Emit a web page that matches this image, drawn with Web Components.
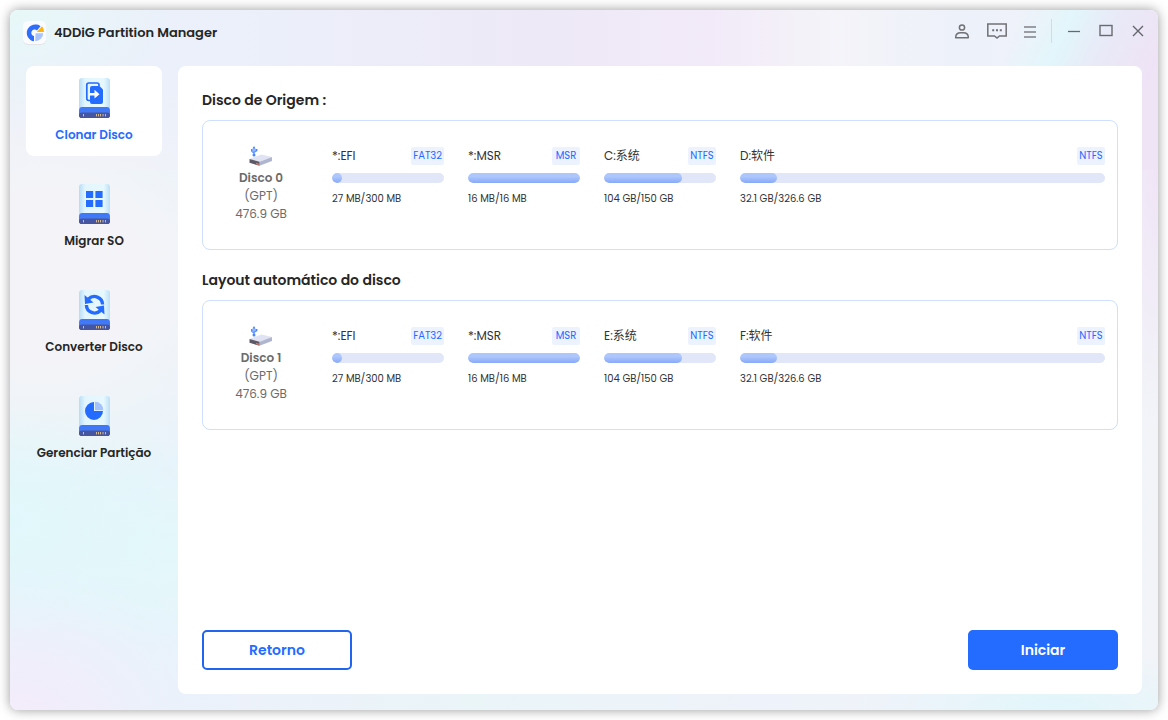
<!DOCTYPE html>
<html lang="pt">
<head>
<meta charset="utf-8">
<meta name="viewport" content="width=device-width, initial-scale=1">
<title>4DDiG Partition Manager</title>
<style>
  html, body { margin: 0; }
  body {
    background: #fff;
    color: #262626;
    font: 12px/18px Poppins, Inter, "Noto Sans CJK SC", sans-serif;
  }
</style>
</head>
<body>
<app-window>
  <title-bar slot="header">4DDiG Partition Manager</title-bar>
  <side-nav slot="nav">
    <nav-item icon="clone" active>Clonar Disco</nav-item>
    <nav-item icon="migrate">Migrar SO</nav-item>
    <nav-item icon="convert">Converter Disco</nav-item>
    <nav-item icon="manage">Gerenciar Partição</nav-item>
  </side-nav>
  <disk-section>
    <span slot="title">Disco de Origem :</span>
    <disk-summary slot="disk" name="Disco 0" scheme="(GPT)" size="476.9 GB"></disk-summary>
    <disk-partition name="*:EFI" format="FAT32" usage="27 MB/300 MB" percent="9"></disk-partition>
    <disk-partition name="*:MSR" format="MSR" usage="16 MB/16 MB" percent="100"></disk-partition>
    <disk-partition name="C:系统" format="NTFS" usage="104 GB/150 GB" percent="70"></disk-partition>
    <disk-partition name="D:软件" format="NTFS" usage="32.1 GB/326.6 GB" percent="10" wide></disk-partition>
  </disk-section>
  <disk-section>
    <span slot="title">Layout automático do disco</span>
    <disk-summary slot="disk" name="Disco 1" scheme="(GPT)" size="476.9 GB"></disk-summary>
    <disk-partition name="*:EFI" format="FAT32" usage="27 MB/300 MB" percent="9"></disk-partition>
    <disk-partition name="*:MSR" format="MSR" usage="16 MB/16 MB" percent="100"></disk-partition>
    <disk-partition name="E:系统" format="NTFS" usage="104 GB/150 GB" percent="70"></disk-partition>
    <disk-partition name="F:软件" format="NTFS" usage="32.1 GB/326.6 GB" percent="10" wide></disk-partition>
  </disk-section>
  <action-button slot="actions">Retorno</action-button>
  <action-button slot="actions" primary>Iniciar</action-button>
</app-window>

<script>
class BaseElement extends HTMLElement {
  connectedCallback() {
    if (this.shadowRoot) return;
    this.attachShadow({ mode: "open" }).innerHTML =
      `<style>*, :host { box-sizing: border-box; }</style>` + this.render();
  }
  attr(name) { return this.getAttribute(name) || ""; }
}

customElements.define("app-window", class extends BaseElement {
  render() {
    return `<style>
      :host { display: flex; min-height: 100vh; padding: 10px; }
      .window {
        flex: 1; display: flex; flex-direction: column; min-width: 0;
        border-radius: 8px;
        box-shadow: 0 0 12px rgba(0, 0, 0, .4);
        background:
          radial-gradient(ellipse 160px 110px at 0% 0%, #e7f8f8, #e7f8f800),
          linear-gradient(115deg, #e2f6fb00 83%, #e2f6fb 87%, #e9e9f7 91%, #efe3f6 96%) top / 100% 160px no-repeat,
          radial-gradient(ellipse 60px 260px at 100% 22%, #f0e4f6, #f0e4f600),
          radial-gradient(ellipse 150px 120px at 0% 73%, #e1f8fb, #e1f8fb00),
          radial-gradient(ellipse 170px 100px at 14% 77%, #e3f8fa, #e3f8fa00),
          radial-gradient(ellipse 220px 160px at 0% 102%, #f5ebfa, #f5ebfa00),
          radial-gradient(ellipse 200px 60px at 91% 100%, #e1f6fb, #e1f6fb00),
          radial-gradient(ellipse 260px 220px at 3% 38%, #f4f4f8 40%, #f4f4f800),
          linear-gradient(to right, #ebf0fa 20%, #eee9f7 46%, #f2eaf8 61%, #f4f4f9 72%, #edf1fa 83%, #f2f4f8) top / 100% 160px no-repeat,
          linear-gradient(to right, #e6f4fa 12%, #ecf1fa 20%, #eaf5f8 40%, #eef2fa 65%, #f2f4f8);
      }
      .body { flex: 1; display: flex; gap: 16px; padding: 0 16px 16px; }
      main {
        flex: 1; display: flex; flex-direction: column; gap: 20px; min-width: 0;
        padding: 24px; background: #fff; border-radius: 8px;
      }
      footer { display: flex; justify-content: space-between; margin-top: auto; }
    </style>
    <div class="window">
      <slot name="header"></slot>
      <div class="body">
        <slot name="nav"></slot>
        <main><slot></slot><footer><slot name="actions"></slot></footer></main>
      </div>
    </div>`;
  }
});

customElements.define("title-bar", class extends BaseElement {
  render() {
    return `<style>
      :host { display: block; }
      header { display: flex; align-items: flex-start; height: 56px; padding: 8px 4px 0 12px; }
      .logo { width: 26px; height: 28px; }
      h1 { flex: 1; margin: 0; padding-left: 6px; font-size: 13px; line-height: 30px; font-weight: 600; }
      .controls { display: flex; align-items: center; }
      button { display: block; padding: 0; border: 0; background: none; height: 26px; width: 32px; }
      button svg { display: block; margin: auto; }
      .first { width: 35px; }
      .rule { width: 1px; height: 24px; background: #d5dae3; margin: 0 6px 0 5px; }
    </style>
    <header>
      <svg class="logo" viewBox="0 0 26 28" aria-hidden="true">
        <rect x="1" y="4" width="23" height="23" rx="5" fill="#e1e4eb"/>
        <rect x="1" y="3" width="23" height="23" rx="5" fill="#fbfbfd"/>
        <path d="M18.5 8.2A8.5 8.5 0 1 0 12 23.3V18A3.3 3.3 0 1 1 15 12.5Z" fill="#2f6dfb"/>
        <path d="M13.6 15.2H21.2A8 8 0 0 1 13.2 23.2Z" fill="#a9c5fc"/>
        <path d="M14.8 14 20 8.3Q22 10.5 22 14Z" fill="#fbb514"/>
      </svg>
      <h1><slot></slot></h1>
      <div class="controls">
        <button class="first" aria-label="Conta"><svg width="16" height="18" viewBox="0 0 16 18" fill="none" stroke="#707176" stroke-width="1.5"><circle cx="8" cy="5.5" r="2.6"/><path d="M1.7 15.8V15A5 4.5 0 0 1 6.5 10.8H9.5A5 4.5 0 0 1 14.3 15V15.8Z" stroke-linejoin="round"/></svg></button>
        <button class="first" aria-label="Mensagens"><svg width="20" height="18" viewBox="0 0 20 18" fill="none" stroke="#707176" stroke-width="1.5"><path d="M.8 2H19.2V14H12.5L10 16 7.5 14H.8Z"/><path d="M5.2 8.2H7.2M9 8.2H11M12.8 8.2H14.8" stroke-width="2"/></svg></button>
        <button aria-label="Menu"><svg width="14" height="18" viewBox="0 0 14 18" stroke="#808187" stroke-width="1.7"><path d="M1 5H13M1 10H13M1 15H13"/></svg></button>
        <span class="rule"></span>
        <button aria-label="Minimizar"><svg width="14" height="18" viewBox="0 0 14 18" stroke="#666a70" stroke-width="1.3"><path d="M1 9.5H13"/></svg></button>
        <button aria-label="Maximizar"><svg width="14" height="18" viewBox="0 0 14 18" stroke="#6a6b70" stroke-width="1.4" fill="none"><rect x="1" y="3.5" width="12" height="10"/></svg></button>
        <button aria-label="Fechar"><svg width="12" height="18" viewBox="0 0 12 18" stroke="#63666b" stroke-width="1.4"><path d="M1 4 11 14M11 4 1 14"/></svg></button>
      </div>
    </header>`;
  }
});

customElements.define("side-nav", class extends BaseElement {
  render() {
    return `<style>
      :host { display: block; flex: 0 0 136px; }
      nav { display: flex; flex-direction: column; gap: 16px; }
    </style><nav><slot></slot></nav>`;
  }
});

const NAV_GLYPHS = {
  clone: `<path d="M11 22.5H9.7A2 2 0 0 1 7.8 20.5V7A2 2 0 0 1 9.8 5H18A2 2 0 0 1 20 7V8" fill="none" stroke="#246bff" stroke-width="1.7"/>
    <path d="M13 8H20.5L24 11.5V24A2 2 0 0 1 22 26H13A2 2 0 0 1 11 24V10A2 2 0 0 1 13 8Z" fill="#246bff"/>
    <path d="M10 15H15.5V11.7L20.5 16.2 15.5 20.5V17.4H10Z" fill="#fff"/>`,
  migrate: `<path d="M7 7H14.2V14H7ZM16.4 7H23.6V14H16.4ZM7 16H14.2V23H7ZM16.4 16H23.6V23H16.4Z" fill="#246bff"/>`,
  convert: `<path d="M9.5 9A8.2 8.2 0 0 1 23.6 14.5M21.5 20.5A8.2 8.2 0 0 1 7.4 15" fill="none" stroke="#246bff" stroke-width="3.4"/>
    <path d="M5.5 5 6 14 14.5 12.5ZM25.5 24.5 25 15.5 16.5 17Z" fill="#246bff"/>`,
  manage: `<path d="M15 6A9 9 0 1 0 24 15H15Z" fill="#246bff"/><path d="M16 5.8A8.4 8.4 0 0 1 24.4 14.2H16Z" fill="#a4c3fb"/>`
};

customElements.define("nav-item", class extends BaseElement {
  render() {
    const id = this.attr("icon");
    return `<style>
      :host { display: block; }
      a {
        display: flex; flex-direction: column; align-items: center; gap: 7px;
        height: 90px; padding-top: 12px; border-radius: 8px;
        color: inherit; text-decoration: none; font-weight: 600; white-space: nowrap;
      }
      :host([active]) a { background: #fff; color: #246bff; }
    </style>
    <a href="#${id}">
      <svg width="31" height="41" viewBox="0 0 31 41" aria-hidden="true">
        <defs>
          <linearGradient id="case"><stop stop-color="#b7dcf6"/><stop offset=".2" stop-color="#e3f6fd"/><stop offset=".8" stop-color="#e7f8fe"/><stop offset="1" stop-color="#bcdff7"/></linearGradient>
          <linearGradient id="base" x2="0" y2="1"><stop stop-color="#3c78fa"/><stop offset="1" stop-color="#4a7cf0"/></linearGradient>
        </defs>
        <path d="M3 0H28A3 3 0 0 1 31 3V36H0V3A3 3 0 0 1 3 0Z" fill="url(#case)"/>
        <path d="M3 29H28Q31 29 31 33V37A3 3 0 0 1 28 40H3A3 3 0 0 1 0 37V33Q0 29 3 29Z" fill="url(#base)"/>
        <rect y="34.4" width="31" height="5.6" rx="2.8" fill="#45559f"/>
        <path d="M4.5 36V38.4M17.5 36V38.4M19.5 36V38.4M21.5 36V38.4M24 36V38.4M26.5 36V38.4" stroke="#d8ba91" stroke-width="1"/>
        ${NAV_GLYPHS[id]}
      </svg>
      <span><slot></slot></span>
    </a>`;
  }
});

customElements.define("disk-section", class extends BaseElement {
  render() {
    return `<style>
      :host { display: block; }
      h2 { margin: 0 0 10px; font-size: 14px; line-height: 20px; font-weight: 600; }
      .card { display: flex; min-height: 130px; padding: 25px 12px 0 0; border: 1px solid #cfdffd; border-radius: 8px; }
      .partitions { flex: 1; display: flex; gap: 24px; min-width: 0; padding-left: 13px; }
    </style>
    <section>
      <h2><slot name="title"></slot></h2>
      <div class="card"><slot name="disk"></slot><div class="partitions"><slot></slot></div></div>
    </section>`;
  }
});

customElements.define("disk-summary", class extends BaseElement {
  render() {
    return `<style>
      :host { display: flex; flex-direction: column; align-items: center; flex: 0 0 116px; color: #6b6b6b; }
      svg { display: block; margin-bottom: 2px; }
      strong { font-weight: 600; }
    </style>
    <svg width="26" height="21" viewBox="0 0 26 21" aria-hidden="true">
      <path d="M1.5 13 13.5 8.6 24 11 11.5 15.7Z" fill="#e0e3f3"/>
      <path d="M11.5 15.7 24 11V15L11.5 19.8Z" fill="#b1b6d0"/>
      <path d="M1.5 13 11.5 15.7V19.8L1.5 16.8Z" fill="#5d5866"/>
      <path d="M8 16.8 10.8 17.6V19L8 18.2Z" fill="#d37a63"/>
      <g stroke="#5f95fc" stroke-width="1.3" fill="none"><path d="M6 2V9M6 7 3.8 5.5V3.5M6 6.5 8.4 5V3.5"/></g>
      <g fill="#4a87fc"><path d="M6 0 7.6 2.5H4.4Z"/><circle cx="6" cy="9" r="1.5"/><circle cx="3.8" cy="3.9" r="1"/><path d="M7.4 3H9.4V5H7.4Z"/></g>
    </svg>
    <strong>${this.attr("name")}</strong>
    <span>${this.attr("scheme")}</span>
    <span>${this.attr("size")}</span>`;
  }
});

customElements.define("disk-partition", class extends BaseElement {
  render() {
    return `<style>
      :host { display: block; flex: 0 0 112px; }
      :host([wide]) { flex: 1; }
      .top { display: flex; justify-content: space-between; align-items: center; height: 20px; margin-bottom: 7px; color: #333; font-size: 12px; }
      .tag { min-width: 28px; padding: 0 2px; border-radius: 2px; background: #edf2ff; color: #246bff; font-size: 10px; line-height: 18px; text-align: center; }
      .track { height: 10px; border-radius: 5px; background: #e1e7f8; overflow: hidden; }
      .fill { height: 10px; border-radius: 5px; background: linear-gradient(#adc7fc 35%, #86a9f9); }
      .usage { margin-top: 6px; color: #333; font-size: 10px; line-height: 20px; }
    </style>
    <div class="top"><span>${this.attr("name")}</span><span class="tag">${this.attr("format")}</span></div>
    <div class="track"><div class="fill" style="width:${this.attr("percent")}%"></div></div>
    <div class="usage">${this.attr("usage")}</div>`;
  }
});

customElements.define("action-button", class extends BaseElement {
  render() {
    return `<style>
      :host { display: block; }
      button {
        width: 150px; height: 40px; padding: 0; border: 2px solid #2065f0; border-radius: 5px;
        background: #fff; color: #246bff; font: inherit; font-size: 14px; font-weight: 600;
      }
      :host([primary]) button { border-color: #246bff; background: #246bff; color: #fff; }
    </style>
    <button type="button"><slot></slot></button>`;
  }
});
</script>
</body>
</html>
